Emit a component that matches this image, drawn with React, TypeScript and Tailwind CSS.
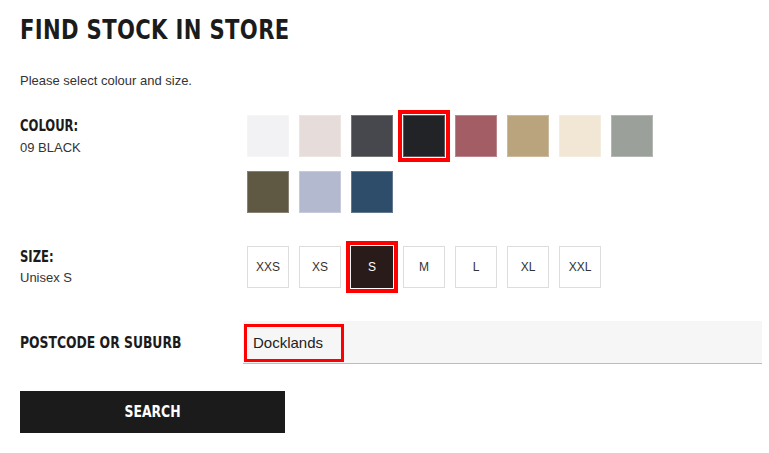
import React from 'react'

const condensed = { fontFamily: '"Liberation Sans Narrow", "DejaVu Sans Condensed", sans-serif' }

const colours = [
  { id: '00', hex: 'bg-[#f2f2f4]' },
  { id: '01', hex: 'bg-[#e6dcd9]' },
  { id: '08', hex: 'bg-[#47484d]' },
  { id: '09', hex: 'bg-[#222326]', selected: true },
  { id: '12', hex: 'bg-[#a35d65]' },
  { id: '32', hex: 'bg-[#b9a47e]' },
  { id: '30', hex: 'bg-[#f1e7d4]' },
  { id: '03', hex: 'bg-[#9ba09b]' },
  { id: '56', hex: 'bg-[#5f5944]' },
  { id: '61', hex: 'bg-[#b3b9cf]' },
  { id: '67', hex: 'bg-[#2e4d6b]' },
]

const sizes = ['XXS', 'XS', 'S', 'M', 'L', 'XL', 'XXL']

function Label({ children }: { children: React.ReactNode }) {
  return (
    <div
      className="block w-max origin-left scale-x-[0.86] whitespace-nowrap text-[15px] leading-[18px] font-bold text-[#1b1b1b]"
      style={condensed}
    >
      {children}
    </div>
  )
}

export default function App() {
  return (
    <div
      className="w-[769px] h-[453px] overflow-hidden bg-white px-5 text-[#222]"
      style={{ fontFamily: '"Liberation Sans", Arial, sans-serif' }}
    >
      <h1
        className="mt-[14px] block w-max origin-left scale-x-[0.87] whitespace-nowrap text-[27px] leading-[32px] font-bold tracking-[0.4px] text-[#1b1b1b]"
        style={condensed}
      >
        FIND STOCK IN STORE
      </h1>
      <p className="mt-[27px] text-[13px] leading-[16px] text-[#333]">Please select colour and size.</p>

      {/* Colour */}
      <div className="mt-[26px] grid grid-cols-[227px_1fr]">
        <div className="pt-[2px]">
          <Label>COLOUR:</Label>
          <div className="mt-[5px] text-[13px] leading-[16px] text-[#333]">09 BLACK</div>
        </div>
        <div className="flex w-[406px] flex-wrap gap-x-[10px] gap-y-[14px]">
          {colours.map(c => (
            <div
              key={c.id}
              className={`h-[42px] w-[42px] ${c.hex} ring-1 ring-inset ring-white/25 ${
                c.selected ? 'outline-4 outline-offset-1 outline-[#ff0000]' : ''
              }`}
            />
          ))}
        </div>
      </div>

      {/* Size */}
      <div className="mt-[33px] grid grid-cols-[227px_1fr]">
        <div className="pt-[2px]">
          <Label>SIZE:</Label>
          <div className="mt-[4px] text-[13px] leading-[16px] text-[#333]">Unisex S</div>
        </div>
        <div className="flex gap-[10px]">
          {sizes.map(s =>
            s === 'S' ? (
              <div
                key={s}
                className="flex h-[42px] w-[42px] items-center justify-center bg-[#2a1b1b] text-[12px] text-white outline-4 outline-offset-1 outline-[#ff0000]"
              >
                {s}
              </div>
            ) : (
              <div
                key={s}
                className="flex h-[42px] w-[42px] items-center justify-center border border-[#dddddd] text-[12px] text-[#333]"
              >
                {s}
              </div>
            )
          )}
        </div>
      </div>

      {/* Postcode */}
      <div className="mt-[33px] flex items-center">
        <div className="w-[223px] shrink-0">
          <div
            className="block w-max origin-left scale-x-[0.86] whitespace-nowrap text-[16px] leading-[18px] font-bold text-[#1b1b1b]"
            style={condensed}
          >
            POSTCODE OR SUBURB
          </div>
        </div>
        <div className="h-[43px] w-[519px] shrink-0 border-b border-[#bdbdbd] bg-[#f6f6f6] pl-[1px] pt-[3px]">
          <div className="flex h-[38px] w-[100px] items-center border-[3px] border-[#ff0000] pl-[6px] text-[15px] text-[#222]">
            Docklands
          </div>
        </div>
      </div>

      <button className="mt-[27px] flex h-[42px] w-[265px] items-center justify-center bg-[#1b1b1b] text-white">
        <span
          className="block w-max scale-x-[0.86] text-[16px] leading-[18px] font-bold"
          style={condensed}
        >
          SEARCH
        </span>
      </button>
    </div>
  )
}
